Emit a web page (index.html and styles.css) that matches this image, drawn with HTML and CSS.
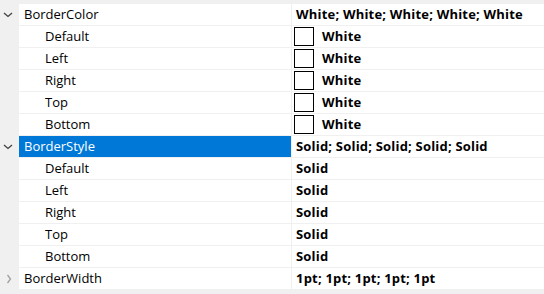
FILE: index.html
```html
<!DOCTYPE html>
<html lang="en">
<head>
  <meta charset="UTF-8">
  <title>Property Grid</title>
  <link rel="stylesheet" href="styles.css">
</head>
<body>

<div class="grid">

  <div class="row">
    <div class="gutter"><svg class="chev" width="10" height="6" viewBox="0 0 10 6"><path d="M1 1 L5 4.5 L9 1" /></svg></div>
    <div class="name">BorderColor</div>
    <div class="value">White; White; White; White; White</div>
  </div>
  <div class="row">
    <div class="gutter"></div>
    <div class="name sub">Default</div>
    <div class="value"><span class="swatch"></span>White</div>
  </div>
  <div class="row">
    <div class="gutter"></div>
    <div class="name sub">Left</div>
    <div class="value"><span class="swatch"></span>White</div>
  </div>
  <div class="row">
    <div class="gutter"></div>
    <div class="name sub">Right</div>
    <div class="value"><span class="swatch"></span>White</div>
  </div>
  <div class="row">
    <div class="gutter"></div>
    <div class="name sub">Top</div>
    <div class="value"><span class="swatch"></span>White</div>
  </div>
  <div class="row">
    <div class="gutter"></div>
    <div class="name sub">Bottom</div>
    <div class="value"><span class="swatch"></span>White</div>
  </div>

  <div class="row">
    <div class="gutter"><svg class="chev" width="10" height="6" viewBox="0 0 10 6"><path d="M1 1 L5 4.5 L9 1" /></svg></div>
    <div class="name selected">BorderStyle</div>
    <div class="value">Solid; Solid; Solid; Solid; Solid</div>
  </div>
  <div class="row">
    <div class="gutter"></div>
    <div class="name sub">Default</div>
    <div class="value">Solid</div>
  </div>
  <div class="row">
    <div class="gutter"></div>
    <div class="name sub">Left</div>
    <div class="value">Solid</div>
  </div>
  <div class="row">
    <div class="gutter"></div>
    <div class="name sub">Right</div>
    <div class="value">Solid</div>
  </div>
  <div class="row">
    <div class="gutter"></div>
    <div class="name sub">Top</div>
    <div class="value">Solid</div>
  </div>
  <div class="row">
    <div class="gutter"></div>
    <div class="name sub">Bottom</div>
    <div class="value">Solid</div>
  </div>

  <div class="row">
    <div class="gutter"><svg class="chev closed" width="6" height="10" viewBox="0 0 6 10"><path d="M1.5 1 L4.5 5 L1.5 9" /></svg></div>
    <div class="name">BorderWidth</div>
    <div class="value">1pt; 1pt; 1pt; 1pt; 1pt</div>
  </div>

</div>

</body>
</html>
```

FILE: styles.css
```css
body {
  margin: 0;
  background: #f0f0f0;
  font-family: 'Open Sans', 'Noto Sans', sans-serif;
  font-size: 13px;
  color: #000;
}
.grid {
  padding-top: 4px;
  height: 290px;
}
.row {
  display: flex;
  height: 22px;
}
.gutter {
  width: 19px;
  display: flex;
  align-items: center;
  padding-left: 3px;
  box-sizing: border-box;
}
.chev {
  fill: none;
  stroke: #404040;
  stroke-width: 1.3;
}
.chev.closed {
  stroke: #a0a0a0;
  margin-left: 3px;
}
.name {
  width: 273px;
  box-sizing: border-box;
  padding-left: 5px;
  background: #fff;
  border-right: 1px solid #f0f0f0;
  border-bottom: 1px solid #f0f0f0;
  line-height: 21px;
  white-space: nowrap;
}
.name.sub {
  padding-left: 26px;
}
.name.selected {
  background: #0078d7;
  color: #fff;
}
.value {
  flex: 1;
  background: #fff;
  border-bottom: 1px solid #f0f0f0;
  padding-left: 4px;
  font-weight: bold;
  letter-spacing: 0.2px;
  line-height: 21px;
  display: flex;
  align-items: center;
  white-space: nowrap;
}
.swatch {
  width: 20px;
  height: 19px;
  box-sizing: border-box;
  border: 1px solid #000;
  background: #fff;
  margin-left: -2px;
  margin-right: 8px;
}
```
